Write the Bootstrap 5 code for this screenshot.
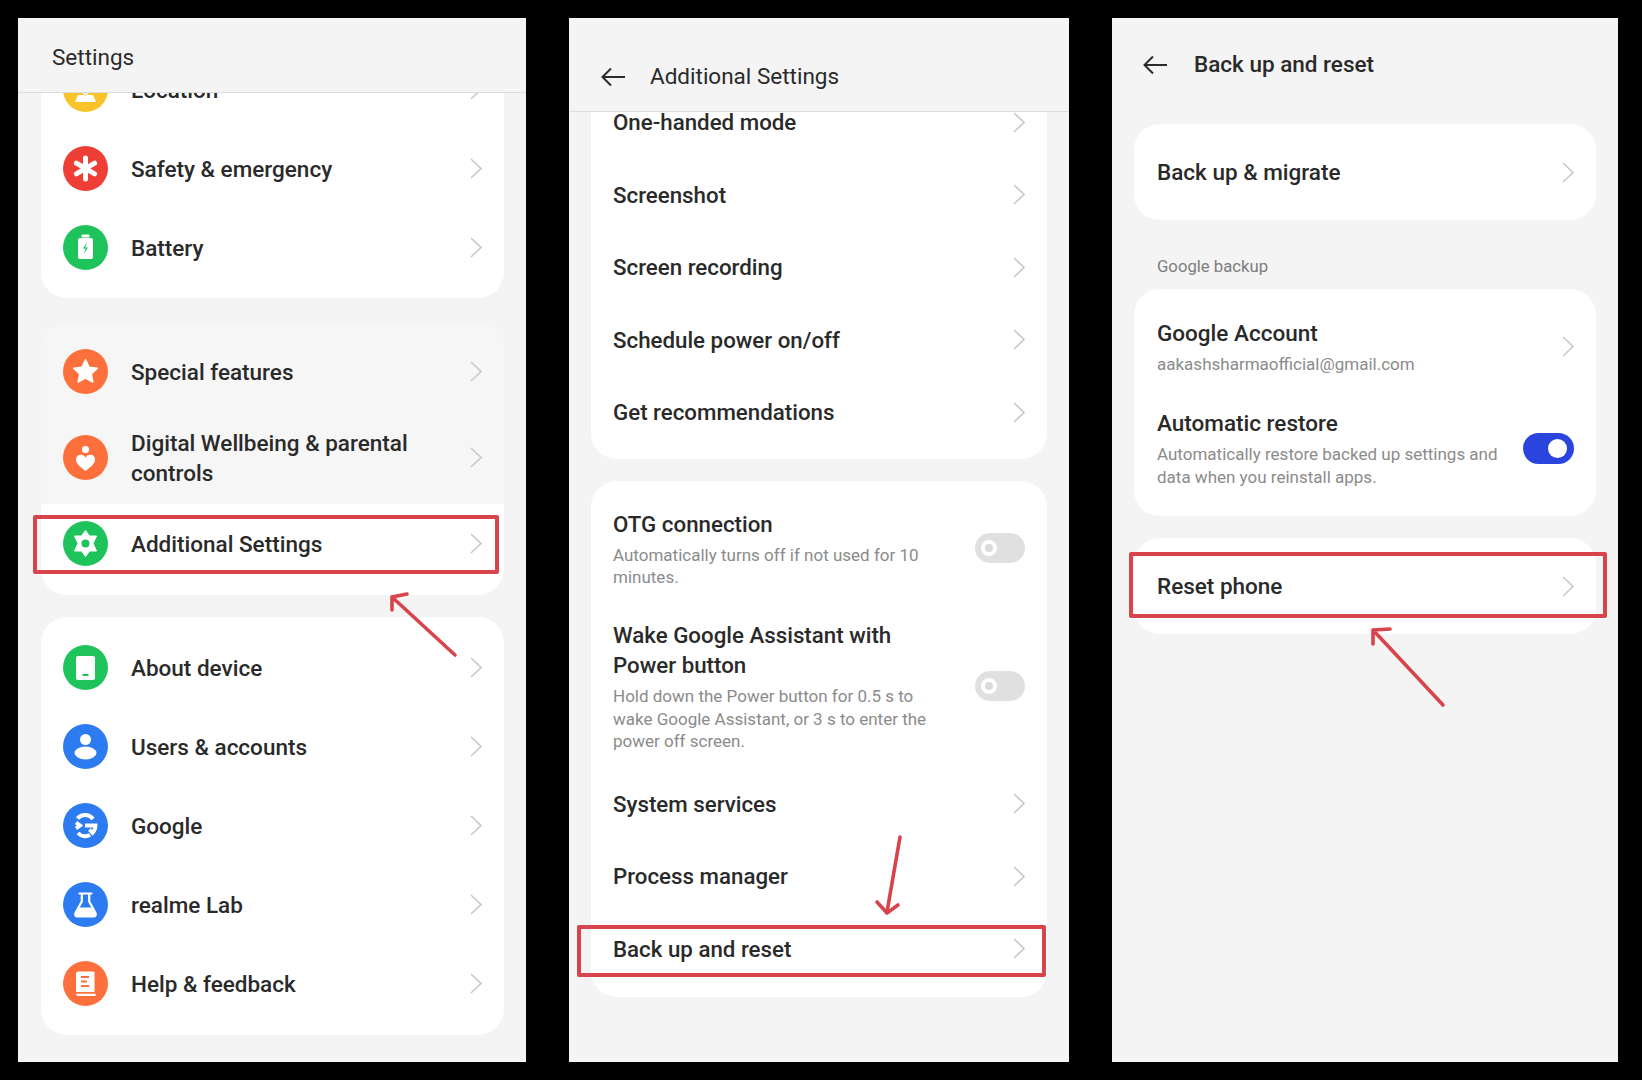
<!DOCTYPE html>
<html lang="en">
<head>
  <meta charset="UTF-8" />
  <meta name="viewport" content="width=device-width, initial-scale=1" />
  <title>Reset phone steps</title>
  <link href="https://cdn.jsdelivr.net/npm/bootstrap@5.3.3/dist/css/bootstrap.min.css" rel="stylesheet" />
  <style>
    body {
      background: #000;
      font-family: Roboto, "Liberation Sans", sans-serif;
      color: #2a2a2a;
      height: 1080px;
      overflow: hidden;
      position: relative;
    }
    .shots { padding: 18px 0 18px 18px; height: 1080px; }
    .phone { background: #f4f4f4; flex: none; }
    .phone-one { width: 508px; margin-right: 43px; }
    .phone-two { width: 500px; margin-right: 43px; }
    .phone-three { width: 506px; }

    .top-bar { border-bottom: 1px solid #dcdcdc; flex: none; }
    .top-one { height: 75px; padding-left: 34px; padding-bottom: 20px; }
    .top-two { height: 94px; padding-left: 32px; padding-bottom: 20px; }
    .top-three { height: 93px; padding-left: 31px; padding-bottom: 32px; border-bottom: 0; }
    .top-title { font-size: 22.5px; line-height: 30px; }
    .top-three .top-title { font-weight: 500; }
    .back-arrow { width: 24px; height: 20px; margin-right: 25px; }
    .top-three .back-arrow { margin-right: 27px; }

    .sheet { background: #fff; border: 0; border-radius: 26px; }
    .sheet-grey { background: #f6f6f6; }
    .pane-one .sheet { margin: 0 22px 0 23px; }
    .pane-two .sheet { margin: 0 22px; }
    .pane-three .sheet { margin: 0 22px; }

    .row-item { padding: 0 22px; position: relative; }
    .pane-three .row-item { padding-left: 23px; }
    .row-label { font-size: 22.5px; line-height: 30px; font-weight: 500; }
    .pane-two .row-label { font-size: 22.3px; }
    .row-note { font-size: 17px; line-height: 22.4px; color: #8b8b8b; margin-top: 5px; }
    .row-tall { height: 79px; }
    .row-mid { height: 72.5px; }
    .row-wide { height: 96px; }
    .row-pad { padding-top: 16px; padding-bottom: 16px; }
    .row-white { background: #fff; border-radius: 0 0 26px 26px; }
    .row-text { flex: 1 1 auto; min-width: 0; }
    .text-limit { max-width: 335px; }
    .note-wide { max-width: 350px; }

    .round-icon { width: 45px; height: 45px; flex: none; margin-right: 23px; }
    .chevron { width: 12px; height: 21px; flex: none; margin-left: 12px; }

    .switch { width: 50px; height: 30px; border-radius: 15px; background: #e0e0e0; flex: none; position: relative; margin-left: 12px; }
    .switch::after { content: ""; position: absolute; left: 6px; top: 7px; width: 16px; height: 16px; border-radius: 50%; border: 4px solid #fff; background: #dbdbdb; }
    .switch-on { background: #2a45dd; width: 51px; height: 31px; border-radius: 16px; }
    .switch-on::after { left: 25px; top: 6px; width: 19px; height: 19px; border: 0; background: #fff; }

    .red-box { position: absolute; border: 4.5px solid #d8444b; border-radius: 2px; pointer-events: none; }
    .box-one { left: -8px; right: 5px; top: 11px; bottom: 9px; }
    .box-two { left: -14px; right: 1px; top: 12px; bottom: 8px; }
    .box-three { left: -5px; right: -11px; top: 14px; bottom: 16px; }

    .section-label { font-size: 16.7px; line-height: 22px; color: #7d7d7d; padding: 36px 0 11px 45px; }

    .arrow-layer { position: absolute; left: 0; top: 0; width: 1642px; height: 1080px; pointer-events: none; }
  </style>
</head>
<body>

  <svg width="0" height="0" class="position-absolute">
    <symbol id="chev" viewBox="0 0 12 21"><path d="M1 1l10 9.5L1 20" fill="none" stroke="#c9c9c9" stroke-width="1.6"/></symbol>
    <symbol id="back" viewBox="0 0 24 20"><path d="M24 10H1.5M10 1.5L1.5 10l8.5 8.5" fill="none" stroke="#2b2b2b" stroke-width="2"/></symbol>
  </svg>

  <div class="shots d-flex">

    <!-- settings list -->
    <div class="phone phone-one d-flex flex-column overflow-hidden">
      <div class="top-bar top-one d-flex align-items-end">
        <span class="top-title">Settings</span>
      </div>
      <div class="pane-one flex-grow-1 overflow-hidden position-relative">
        <div class="sheet" style="margin-top:-43px;padding-bottom:11px">
          <div class="row-item row-tall d-flex align-items-center">
            <svg class="round-icon" viewBox="0 0 45 45"><circle cx="22.5" cy="22.5" r="22.5" fill="#f9c429"/><path d="M22.5 9a8 8 0 0 0-8 8c0 5 8 12 8 12s8-7 8-12a8 8 0 0 0-8-8zM12 35l3-7h15l3 7z" fill="#fff"/></svg>
            <span class="row-label row-text">Location</span>
            <svg class="chevron"><use href="#chev"/></svg>
          </div>
          <div class="row-item row-tall d-flex align-items-center">
            <svg class="round-icon" viewBox="0 0 45 45"><circle cx="22.5" cy="22.5" r="22.5" fill="#ef3e36"/><path d="M22.5 12v21M13.4 17.2l18.2 10.6M31.6 17.2L13.4 27.8" stroke="#fff" stroke-width="5" stroke-linecap="round"/></svg>
            <span class="row-label row-text">Safety &amp; emergency</span>
            <svg class="chevron"><use href="#chev"/></svg>
          </div>
          <div class="row-item row-tall d-flex align-items-center">
            <svg class="round-icon" viewBox="0 0 45 45"><circle cx="22.5" cy="22.5" r="22.5" fill="#1fc35c"/><rect x="18.5" y="9.5" width="8" height="3" rx="1" fill="#fff"/><rect x="15" y="13" width="15" height="21" rx="2" fill="#fff"/><path d="M24 17.5l-4 6h2.6l-1.6 5 4-6h-2.6z" fill="#1fc35c"/></svg>
            <span class="row-label row-text">Battery</span>
            <svg class="chevron"><use href="#chev"/></svg>
          </div>
        </div>

        <div class="sheet sheet-grey" style="margin-top:25px;padding-top:9px">
          <div class="row-item row-tall d-flex align-items-center">
            <svg class="round-icon" viewBox="0 0 45 45"><circle cx="22.5" cy="22.5" r="22.5" fill="#fd703c"/><path d="M22.5 10.5l3.6 7.6 8.3 1.1-6.1 5.7 1.6 8.2-7.4-4-7.4 4 1.6-8.2-6.1-5.7 8.3-1.1z" fill="#fff" stroke="#fff" stroke-width="1.4" stroke-linejoin="round"/></svg>
            <span class="row-label row-text">Special features</span>
            <svg class="chevron"><use href="#chev"/></svg>
          </div>
          <div class="row-item d-flex align-items-center" style="height:93px">
            <svg class="round-icon" viewBox="0 0 45 45"><circle cx="22.5" cy="22.5" r="22.5" fill="#fd703c"/><circle cx="22.5" cy="14.5" r="3.6" fill="#fff"/><path d="M22.5 36C18 32.5 13 29 13 24.5a5 5 0 0 1 9.5-2 5 5 0 0 1 9.5 2C32 29 27 32.5 22.5 36z" fill="#fff"/></svg>
            <span class="row-label row-text">Digital Wellbeing &amp; parental controls</span>
            <svg class="chevron"><use href="#chev"/></svg>
          </div>
          <div class="row-white" style="padding-bottom:12px">
            <div class="row-item row-tall d-flex align-items-center">
              <svg class="round-icon" viewBox="0 0 45 45"><circle cx="22.5" cy="22.5" r="22.5" fill="#1fc35c"/><path d="M22.5 9.5l4 5.5h7l-3.5 7.5 3.5 7.5h-7l-4 5.5-4-5.5h-7l3.5-7.5-3.5-7.5h7z" fill="#fff" stroke="#fff" stroke-width="1" stroke-linejoin="round"/><circle cx="22.5" cy="22.5" r="4" fill="#1fc35c"/></svg>
              <span class="row-label row-text">Additional Settings</span>
              <svg class="chevron"><use href="#chev"/></svg>
              <div class="red-box box-one"></div>
            </div>
          </div>
        </div>

        <div class="sheet" style="margin-top:22px;padding:11px 0 12px">
          <div class="row-item row-tall d-flex align-items-center">
            <svg class="round-icon" viewBox="0 0 45 45"><circle cx="22.5" cy="22.5" r="22.5" fill="#1fc35c"/><rect x="13" y="11" width="19" height="24" rx="2" fill="#fff"/><rect x="19.5" y="29" width="6" height="2" fill="#1fc35c"/></svg>
            <span class="row-label row-text">About device</span>
            <svg class="chevron"><use href="#chev"/></svg>
          </div>
          <div class="row-item row-tall d-flex align-items-center">
            <svg class="round-icon" viewBox="0 0 45 45"><circle cx="22.5" cy="22.5" r="22.5" fill="#2c7bf0"/><circle cx="22.5" cy="15.5" r="5.5" fill="#fff"/><ellipse cx="22.5" cy="29" rx="11" ry="6.5" fill="#fff"/></svg>
            <span class="row-label row-text">Users &amp; accounts</span>
            <svg class="chevron"><use href="#chev"/></svg>
          </div>
          <div class="row-item row-tall d-flex align-items-center">
            <svg class="round-icon" viewBox="0 0 45 45"><circle cx="22.5" cy="22.5" r="22.5" fill="#2c7bf0"/><path d="M30 16a10 10 0 0 0-15.5-.5M13 19.5l4 3-4 3M15 30a10 10 0 0 0 12 2" fill="none" stroke="#fff" stroke-width="4"/><path d="M22 22.5h10.5c0 3-1 5.5-3 7.5l-3-3.5" fill="none" stroke="#fff" stroke-width="3.8"/></svg>
            <span class="row-label row-text">Google</span>
            <svg class="chevron"><use href="#chev"/></svg>
          </div>
          <div class="row-item row-tall d-flex align-items-center">
            <svg class="round-icon" viewBox="0 0 45 45"><circle cx="22.5" cy="22.5" r="22.5" fill="#2c7bf0"/><path d="M16.5 11.5h12M18.8 11.5v8L12.5 31c-.8 1.8 0 3.5 2 3.5h16c2 0 2.8-1.7 2-3.5l-6.3-11.5v-8" fill="none" stroke="#fff" stroke-width="2.2" stroke-linecap="round"/><path d="M16.5 25.5h12l3.5 6.5c.5 1.5 0 2.5-1.5 2.5h-16c-1.5 0-2-1-1.500-2.500z" fill="#fff"/></svg>
            <span class="row-label row-text">realme Lab</span>
            <svg class="chevron"><use href="#chev"/></svg>
          </div>
          <div class="row-item row-tall d-flex align-items-center">
            <svg class="round-icon" viewBox="0 0 45 45"><circle cx="22.5" cy="22.5" r="22.5" fill="#fd703c"/><path d="M15 10.5h15c1 0 1.5.5 1.5 1.5v19H13V12.5c0-1 1-2 2-2z" fill="#fff"/><path d="M13 32.8h19.5V35H15c-1 0-2-1-2-2.2z" fill="#fff"/><path d="M18 16h8M18 20.5h6M18 25h8" stroke="#fd703c" stroke-width="1.8"/></svg>
            <span class="row-label row-text">Help &amp; feedback</span>
            <svg class="chevron"><use href="#chev"/></svg>
          </div>
        </div>
      </div>
    </div>

    <!-- additional settings -->
    <div class="phone phone-two d-flex flex-column overflow-hidden">
      <div class="top-bar top-two d-flex align-items-end">
        <svg class="back-arrow mb-1"><use href="#back"/></svg>
        <span class="top-title">Additional Settings</span>
      </div>
      <div class="pane-two flex-grow-1 overflow-hidden position-relative">
        <div class="sheet" style="margin-top:-26px;padding-bottom:10px">
          <div class="row-item row-mid d-flex align-items-center"><span class="row-label row-text">One-handed mode</span><svg class="chevron"><use href="#chev"/></svg></div>
          <div class="row-item row-mid d-flex align-items-center"><span class="row-label row-text">Screenshot</span><svg class="chevron"><use href="#chev"/></svg></div>
          <div class="row-item row-mid d-flex align-items-center"><span class="row-label row-text">Screen recording</span><svg class="chevron"><use href="#chev"/></svg></div>
          <div class="row-item row-mid d-flex align-items-center"><span class="row-label row-text">Schedule power on/off</span><svg class="chevron"><use href="#chev"/></svg></div>
          <div class="row-item row-mid d-flex align-items-center"><span class="row-label row-text">Get recommendations</span><svg class="chevron"><use href="#chev"/></svg></div>
        </div>

        <div class="sheet" style="margin-top:22px;padding:12px 0 12px">
          <div class="row-item row-pad d-flex align-items-center">
            <div class="row-text">
              <div class="row-label">OTG connection</div>
              <div class="row-note text-limit">Automatically turns off if not used for 10 minutes.</div>
            </div>
            <span class="switch"></span>
          </div>
          <div class="row-item row-pad d-flex align-items-center" style="padding-bottom:15px">
            <div class="row-text">
              <div class="row-label text-limit">Wake Google Assistant with Power button</div>
              <div class="row-note text-limit">Hold down the Power button for 0.5 s to wake Google Assistant, or 3 s to enter the power off screen.</div>
            </div>
            <span class="switch"></span>
          </div>
          <div class="row-item row-mid d-flex align-items-center"><span class="row-label row-text">System services</span><svg class="chevron"><use href="#chev"/></svg></div>
          <div class="row-item row-mid d-flex align-items-center"><span class="row-label row-text">Process manager</span><svg class="chevron"><use href="#chev"/></svg></div>
          <div class="row-item row-mid d-flex align-items-center">
            <span class="row-label row-text">Back up and reset</span>
            <svg class="chevron"><use href="#chev"/></svg>
            <div class="red-box box-two"></div>
          </div>
        </div>
      </div>
    </div>

    <!-- back up and reset -->
    <div class="phone phone-three d-flex flex-column overflow-hidden">
      <div class="top-bar top-three d-flex align-items-end">
        <svg class="back-arrow mb-1"><use href="#back"/></svg>
        <span class="top-title">Back up and reset</span>
      </div>
      <div class="pane-three flex-grow-1">
        <div class="sheet" style="margin-top:13px">
          <div class="row-item row-wide d-flex align-items-center"><span class="row-label row-text">Back up &amp; migrate</span><svg class="chevron"><use href="#chev"/></svg></div>
        </div>
        <div class="section-label">Google backup</div>
        <div class="sheet" style="padding:13px 0 12px">
          <div class="row-item row-pad d-flex align-items-center" style="padding-bottom:17px">
            <div class="row-text">
              <div class="row-label">Google Account</div>
              <div class="row-note">aakashsharmaofficial@gmail.com</div>
            </div>
            <svg class="chevron"><use href="#chev"/></svg>
          </div>
          <div class="row-item row-pad d-flex align-items-center">
            <div class="row-text">
              <div class="row-label">Automatic restore</div>
              <div class="row-note note-wide">Automatically restore backed up settings and data when you reinstall apps.</div>
            </div>
            <span class="switch switch-on"></span>
          </div>
        </div>
        <div class="sheet" style="margin-top:22px">
          <div class="row-item row-wide d-flex align-items-center">
            <span class="row-label row-text">Reset phone</span>
            <svg class="chevron"><use href="#chev"/></svg>
            <div class="red-box box-three"></div>
          </div>
        </div>
      </div>
    </div>
  </div>

  <!-- hand drawn arrows on top of the shots -->
  <svg class="arrow-layer" viewBox="0 0 1642 1080" fill="none" stroke="#d8444b" stroke-width="3.6" stroke-linecap="round" stroke-linejoin="round">
    <path d="M455 655L392 597M407 594L392 597L392 610"/>
    <path d="M900 837L887 912M877 902L887 913L898 905"/>
    <path d="M1443 705L1373 630M1390 629L1373 630L1373 644"/>
  </svg>

  <script src="https://cdn.jsdelivr.net/npm/bootstrap@5.3.3/dist/js/bootstrap.bundle.min.js"></script>
</body>
</html>
